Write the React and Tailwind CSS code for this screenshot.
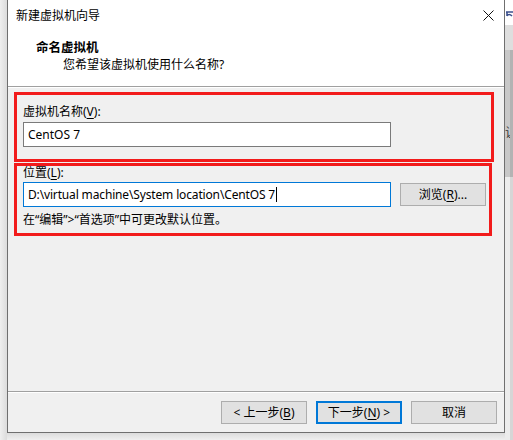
import React from 'react';

const font = "font-['Noto_Sans','Noto_Sans_CJK_SC',sans-serif]";

const Key = ({ children }) => <span className="underline underline-offset-2">{children}</span>;

const Button = ({ children, primary }) => (
  <button
    className={`w-[86px] h-[23px] flex items-center justify-center text-[12px] text-black bg-[#e1e1e1] ${
      primary ? 'border-2 border-[#0078d7]' : 'border border-[#adadad]'
    }`}
  >
    {children}
  </button>
);

const RightStrip = () => (
  <div className="w-[8px] h-full flex flex-col overflow-hidden">
    <div className="h-[10px] bg-white" />
    <div className="h-[15px] bg-white relative">
      <svg width="8" height="15" viewBox="0 0 8 15" className="block">
        <path d="M1 2 H8 M2 2 V6 M2 6 C3 4 5 4 7 6" stroke="#3b4f8c" strokeWidth="1.6" fill="none" />
      </svg>
    </div>
    <div className="h-[25px] bg-[#dedede]" />
    <div className="h-[127px] bg-[#c8c8c8] flex">
      <div className="w-[5px] h-full overflow-hidden">
        <div className="mt-[76px] text-[12px] leading-[14px] text-[#333] whitespace-nowrap">让</div>
      </div>
      <div className="flex-1 bg-[#b3b3b3]" />
    </div>
    <div className="flex-1 bg-[#ececec] flex">
      <div className="w-[5px]" />
      <div className="flex-1 bg-[#d6d6d6]" />
    </div>
  </div>
);

export default function App() {
  return (
    <div className={`w-[513px] h-[440px] bg-[#ececec] overflow-hidden flex ${font}`}>
      <div className="w-[7px] h-full bg-gradient-to-r from-[#efefef] to-[#dcdcdc]" />
      <div className="w-[499px] h-full flex flex-col">
        <div className="h-[433px] flex flex-col bg-[#f0f0f0] border-x border-b border-[#6f6f6f]">
          {/* header */}
          <div className="h-[86px] bg-white shrink-0">
            <div className="h-[31px] flex items-center justify-between pl-2 pr-[10px]">
              <span className="text-[12px] text-black">新建虚拟机向导</span>
              <svg width="11" height="11" viewBox="0 0 11 11">
                <path d="M0.5 0.5 L10.5 10.5 M10.5 0.5 L0.5 10.5" stroke="#111" strokeWidth="1" />
              </svg>
            </div>
            <div className="mt-[9px] pl-[28px] text-[12.5px] leading-[16px] font-bold text-black">命名虚拟机</div>
            <div className="pl-[55px] text-[12px] leading-[17px] text-black">您希望该虚拟机使用什么名称?</div>
          </div>
          <div className="h-px bg-[#a0a0a0]" />
          <div className="h-px bg-white" />

          {/* body */}
          <div className="flex-1 pl-[6px] pt-[4px]">
            <div className="w-[480px] h-[70px] border-[3px] border-[#f21b1b] pl-[6px] pt-[10px]">
              <div className="text-[12px] leading-[14px] text-black">
                虚拟机名称(<Key>V</Key>):
              </div>
              <div className="mt-[3px] w-[368px] h-[25px] bg-white border border-[#7a7a7a] flex items-center pl-[4px] text-[12px] text-black">
                CentOS 7
              </div>
            </div>
            <div className="mt-px w-[478px] h-[73px] border-[3px] border-[#f21b1b] pl-[6px]">
              <div className="text-[12px] leading-[14px] text-black">
                位置(<Key>L</Key>):
              </div>
              <div className="mt-[2px] flex items-center">
                <div className="w-[368px] h-[25px] bg-white border border-[#0078d7] flex items-center pl-[4px] text-[12px] tracking-[-0.15px] text-black whitespace-nowrap">
                  D:\virtual machine\System location\CentOS 7
                  <span className="inline-block w-px h-[15px] bg-black ml-px" />
                </div>
                <div className="ml-[9px]">
                  <Button>
                    浏览(<Key>R</Key>)...
                  </Button>
                </div>
              </div>
              <div className="mt-[6px] text-[12px] leading-[14px] text-black">
                在“编辑”&gt;“首选项”中可更改默认位置。
              </div>
            </div>
          </div>

          {/* footer */}
          <div className="h-px bg-[#a0a0a0]" />
          <div className="h-px bg-white" />
          <div className="h-[39px] flex items-start justify-end gap-[9px] pr-[7px] pt-[8px]">
            <Button>
              &lt; 上一步(<Key>B</Key>)
            </Button>
            <Button primary>
              下一步(<Key>N</Key>) &gt;
            </Button>
            <Button>取消</Button>
          </div>
        </div>
        <div className="flex-1 bg-gradient-to-b from-[#dcdcdc] to-[#efefef]" />
      </div>
      <RightStrip />
    </div>
  );
}
